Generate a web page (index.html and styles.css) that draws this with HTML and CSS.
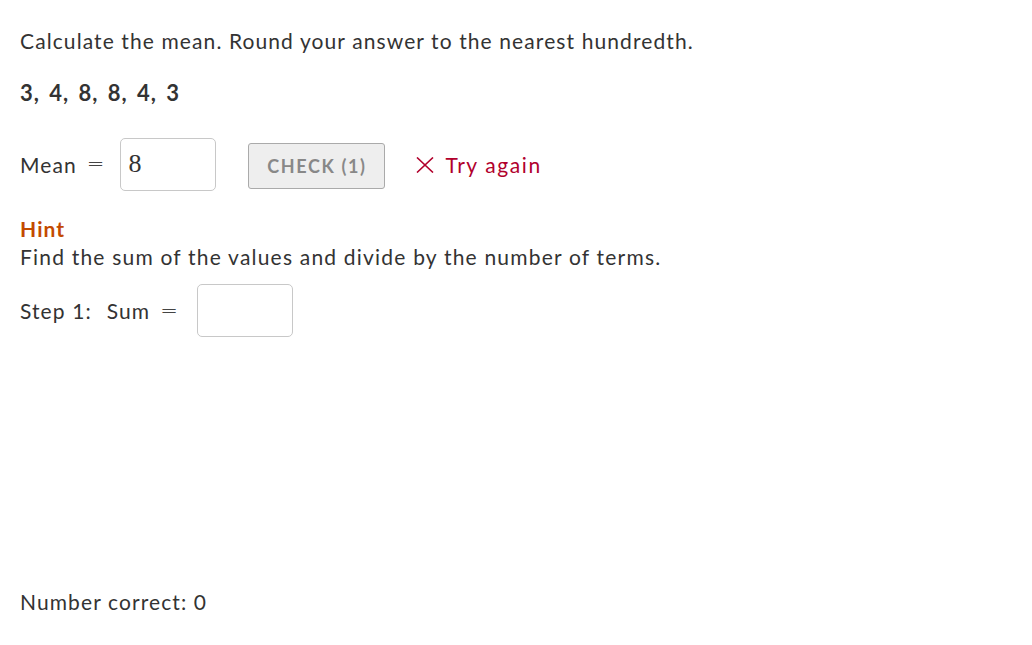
FILE: index.html
```html
<!DOCTYPE html>
<html>
<head>
<meta charset="utf-8">
<link rel="stylesheet" href="styles.css">
</head>
<body>
<div class="page">
  <p class="prompt">Calculate the mean. Round your answer to the nearest hundredth.</p>
  <p class="data">3, 4, 8, 8, 4, 3</p>
  <div class="answer-row">
    <span class="label">Mean</span><span class="eq">=</span>
    <div class="input filled"><span class="math">8</span></div>
    <button class="check">CHECK (1)</button>
    <span class="feedback"><svg class="x" viewBox="0 0 18 16" width="18" height="16"><path d="M1 0.5 L17 15.5 M17 0.5 L1 15.5" stroke="currentColor" stroke-width="1.6" fill="none"/></svg>Try again</span>
  </div>
  <div class="hint">
    <div class="hint-title">Hint</div>
    <p class="hint-text">Find the sum of the values and divide by the number of terms.</p>
    <div class="step-row">
      <span class="label">Step 1:</span><span class="label sum">Sum</span><span class="eq">=</span>
      <div class="input small"></div>
    </div>
  </div>
  <p class="score">Number correct: 0</p>
</div>
</body>
</html>
```
FILE: styles.css
```css
html, body { margin: 0; padding: 0; background: #fff; }
body {
  font-family: "Lato", "DejaVu Sans", sans-serif;
  color: #333;
  font-size: 21px;
  letter-spacing: 1.1px;
}
.page { padding: 0 20px; display: flex; flex-direction: column; }
p { margin: 0; }
.prompt { margin-top: 28px; line-height: 26px; }
.data { margin-top: 26px; font-weight: bold; line-height: 26px; font-size: 22px; letter-spacing: 1px; word-spacing: 3px; }
.answer-row { display: flex; align-items: center; margin-top: 31px; height: 54px; }
.label { white-space: nowrap; }
.sum { margin-left: 15px; }
.eq { font-family: "DejaVu Sans", sans-serif; font-weight: 200; margin-left: 10px; letter-spacing: 0; color: #444; }
.input {
  box-sizing: border-box;
  width: 96px; height: 53px;
  border: 1px solid #c8c8c8;
  border-radius: 5px;
  background: #fff;
  margin-left: 16px;
  display: flex; align-items: center;
}
.input .math { font-family: "Liberation Serif", serif; font-size: 26px; margin-left: 7px; color: #333; letter-spacing: 0; line-height: 1; }
.input.small { margin-left: 19px; }
.check {
  box-sizing: border-box;
  margin-left: 32px;
  margin-top: 4px;
  width: 137px; height: 46px;
  background: #eee;
  border: 1px solid #aaa;
  border-radius: 3px;
  font-family: "Lato", "DejaVu Sans", sans-serif;
  font-weight: bold;
  font-size: 18px;
  color: #888;
  letter-spacing: 1.6px;
  padding: 0;
}
.feedback { margin-left: 31px; color: #b1002c; display: flex; align-items: center; gap: 11px; letter-spacing: 1.6px; }
.x { width: 18px; height: 16px; margin-top: 2px; }
.hint { margin-top: 25px; }
.hint-title { color: #c34a00; font-weight: bold; line-height: 26px; }
.hint-text { line-height: 26px; margin-top: 2px; letter-spacing: 1.2px; }
.step-row { display: flex; align-items: center; margin-top: 14px; }
.score { margin-top: 252px; }
```
